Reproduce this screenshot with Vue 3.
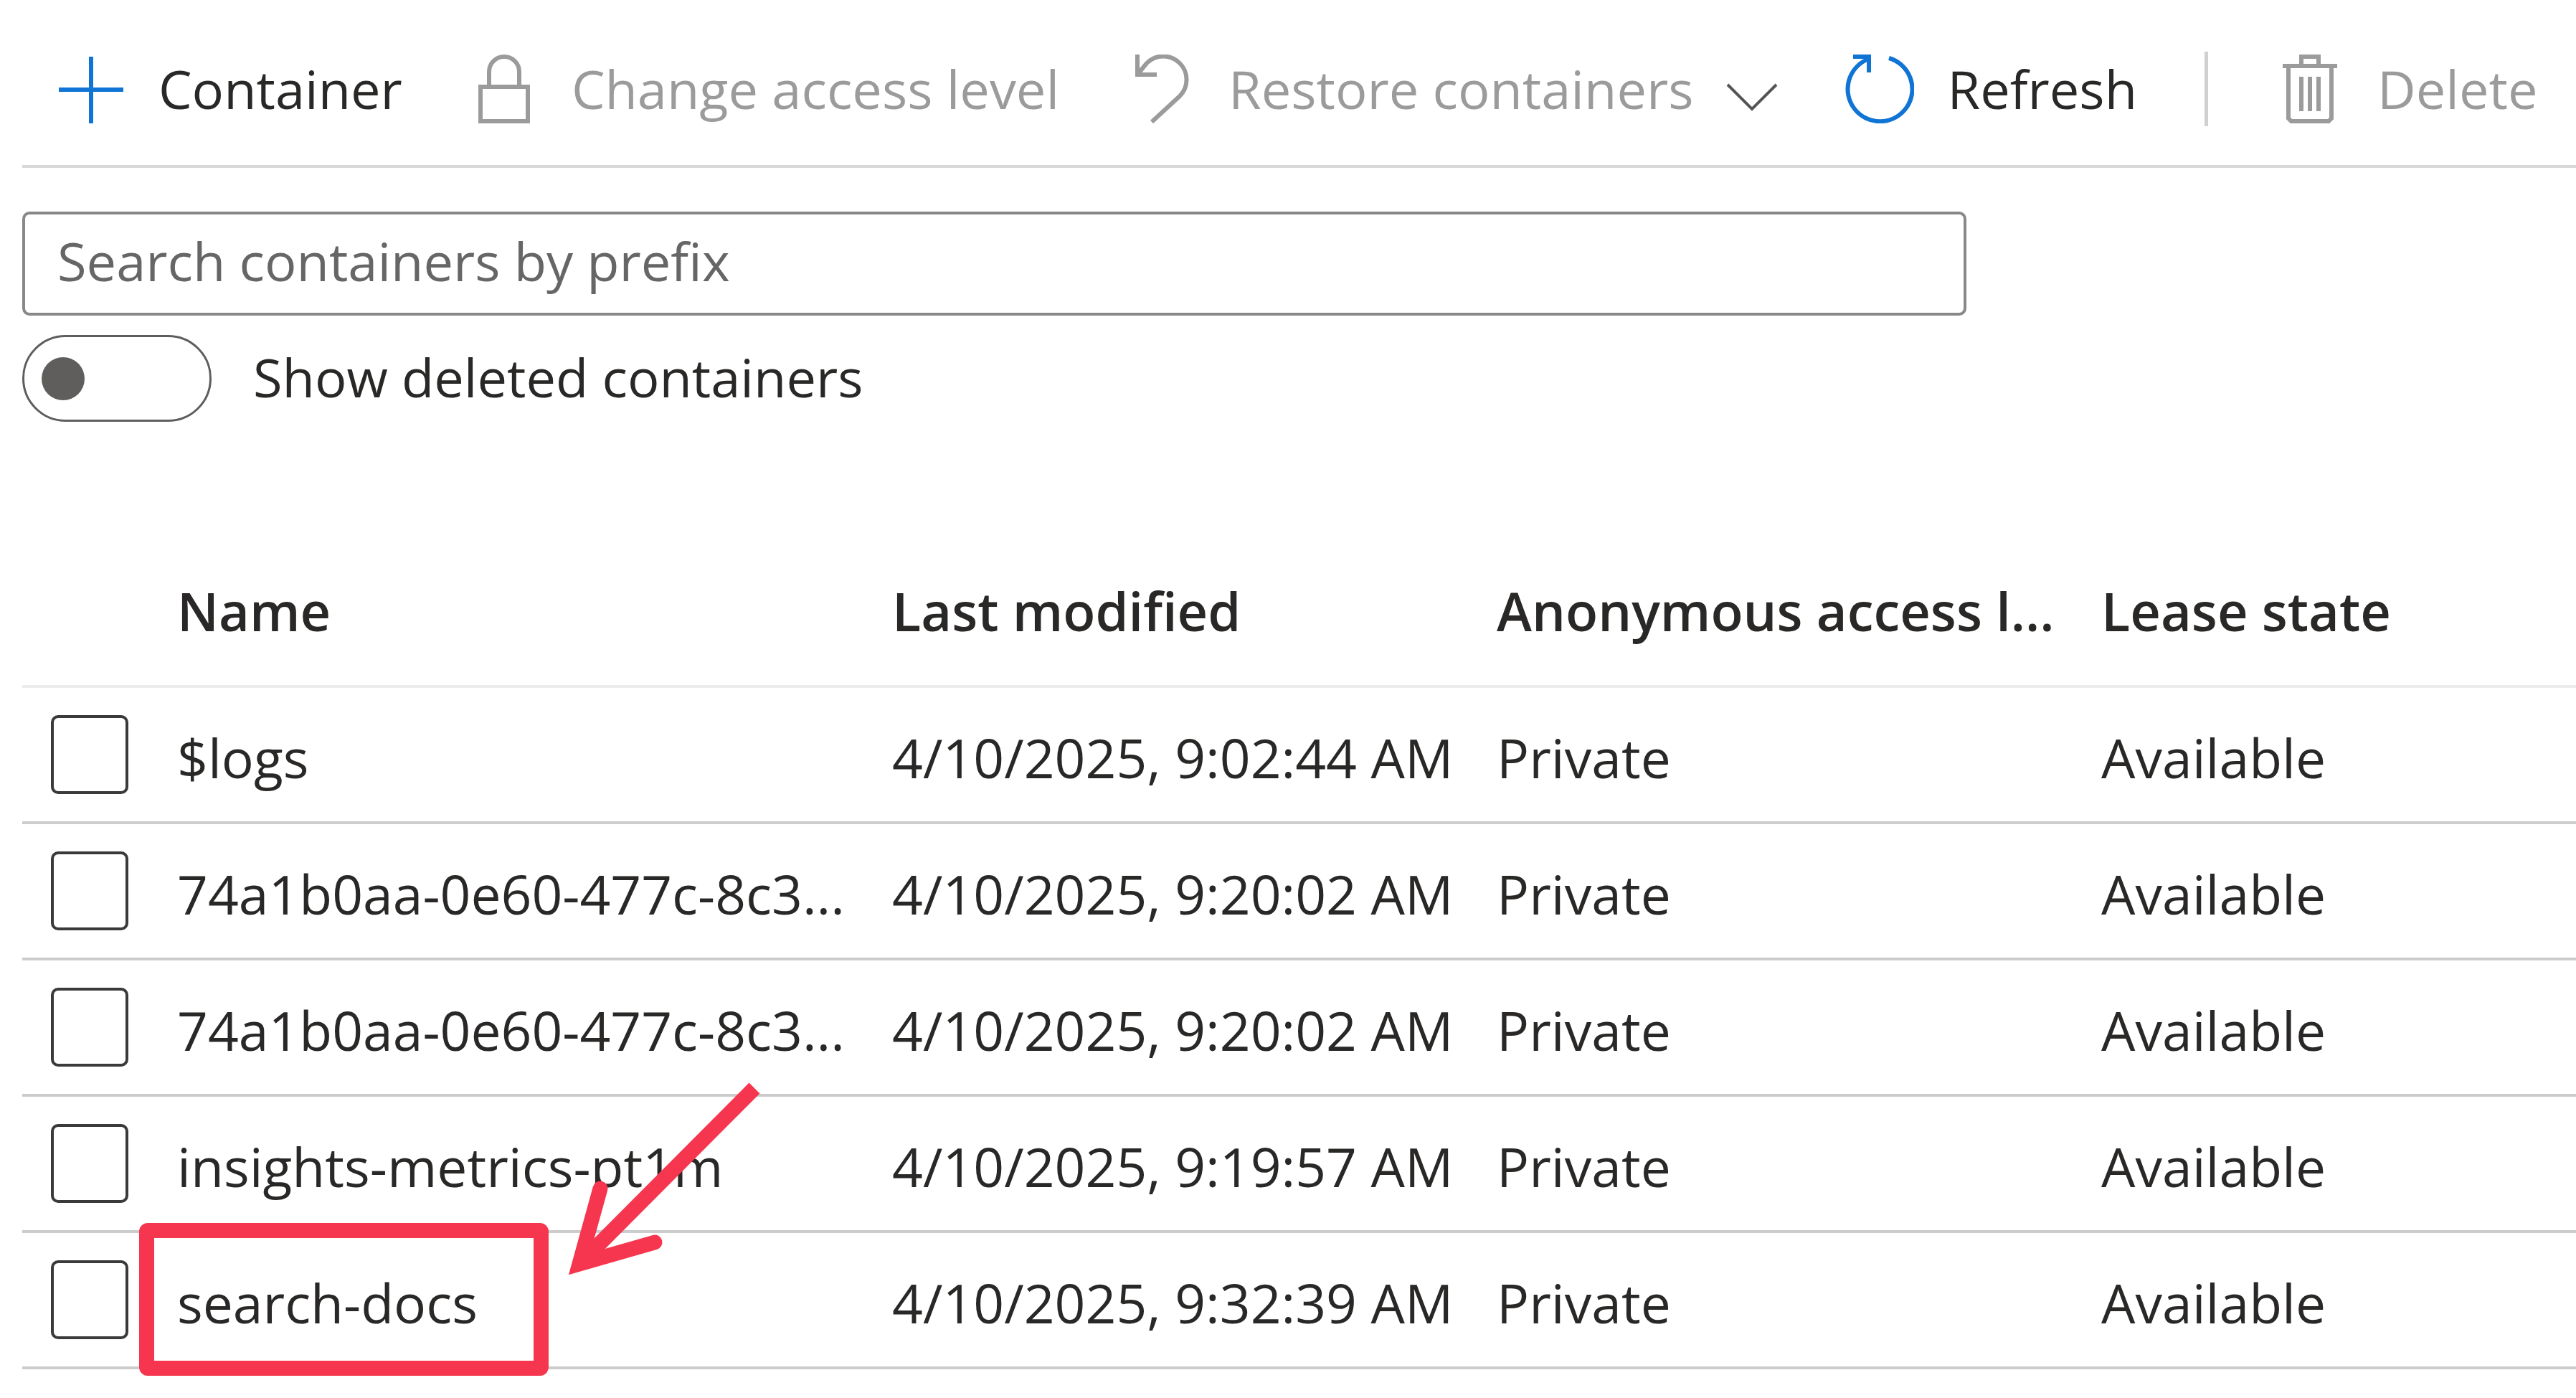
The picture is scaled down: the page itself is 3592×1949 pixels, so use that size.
<script setup>
import { ref } from 'vue'

const search = ref('')
const showDeleted = ref(false)
const columns = ['Name', 'Last modified', 'Anonymous access l...', 'Lease state']
const rows = ref([
  { name: '$logs', modified: '4/10/2025, 9:02:44 AM', selected: false },
  { name: '74a1b0aa-0e60-477c-8c3...', modified: '4/10/2025, 9:20:02 AM', selected: false },
  { name: '74a1b0aa-0e60-477c-8c3...', modified: '4/10/2025, 9:20:02 AM', selected: false },
  { name: 'insights-metrics-pt1m', modified: '4/10/2025, 9:19:57 AM', selected: false },
  { name: 'search-docs', modified: '4/10/2025, 9:32:39 AM', selected: false, marked: true },
])
</script>

<template>
  <main class="page">
    <div class="toolbar" role="toolbar" aria-label="Container actions">
      <button type="button" class="command">
        <svg class="icon blue" viewBox="0 0 96 96"><path d="M48 3v93M3 49h90" /></svg>
        <span>Container</span>
      </button>
      <button type="button" class="command" disabled>
        <svg class="icon" viewBox="0 0 96 96"><path d="M15 45h66v48H15zM27 45V24a21 21 0 0 1 42 0v21" /></svg>
        <span>Change access level</span>
      </button>
      <button type="button" class="command" disabled>
        <svg class="icon" viewBox="0 0 96 96"><path d="M15 0v28h27M15 28L28 12A32 32 0 0 1 74 58L35 94" /></svg>
        <span>Restore containers</span>
        <svg class="chevron" viewBox="0 0 72 40"><path d="M2 2l34 34L70 2" /></svg>
      </button>
      <button type="button" class="command">
        <svg class="icon blue" viewBox="0 0 96 96"><path d="M11 3h25M33 3v22M33 6A45 45 0 1 0 61 5" /></svg>
        <span>Refresh</span>
      </button>
      <span class="divider"></span>
      <button type="button" class="command" disabled>
        <svg class="icon" viewBox="0 0 96 96"><path d="M10 16h76M36 16V3h24v13M18 16v73l4 4h52l4-4V16M36 31v48M48 31v48M60 31v48" /></svg>
        <span>Delete</span>
      </button>
    </div>

    <div class="filters">
      <input v-model="search" class="search" type="text" placeholder="Search containers by prefix" aria-label="Search containers by prefix" />
      <label class="switch">
        <input v-model="showDeleted" type="checkbox" role="switch" />
        <span>Show deleted containers</span>
      </label>
    </div>

    <table class="grid">
      <colgroup>
        <col class="col-select" />
        <col class="col-name" />
        <col class="col-modified" />
        <col class="col-access" />
        <col />
      </colgroup>
      <thead>
        <tr>
          <td></td>
          <th v-for="column in columns" :key="column" scope="col">{{ column }}</th>
        </tr>
      </thead>
      <tbody>
        <tr v-for="(row, index) in rows" :key="index">
          <td class="select"><input v-model="row.selected" type="checkbox" :aria-label="'Select ' + row.name" /></td>
          <td class="name">
            {{ row.name }}
            <template v-if="row.marked">
              <span class="highlight"></span>
              <svg class="arrow" viewBox="0 0 280 280">
                <path d="M267 11L23 256" />
                <path class="head" d="M52 151L23 256L128 226" />
              </svg>
            </template>
          </td>
          <td>{{ row.modified }}</td>
          <td>Private</td>
          <td>Available</td>
        </tr>
      </tbody>
    </table>
  </main>
</template>

<style>
body {
  background: #fff;
}
</style>

<style scoped>
.page {
  padding: 0 0 32px 31px;
  color: #292827;
  font-family: "Open Sans", "Noto Sans", sans-serif;
  font-size: 74px;
  line-height: 100px;
}

.toolbar {
  display: flex;
  align-items: center;
  gap: 94px;
  height: 234px;
  box-sizing: border-box;
  padding: 18px 0 0 48px;
  border-bottom: 4px solid #d8d8d8;
}

.command {
  display: flex;
  flex: none;
  align-items: center;
  gap: 46px;
  padding: 0;
  border: 0;
  background: none;
  color: inherit;
  font: inherit;
  white-space: nowrap;
}

.command:disabled {
  color: #9b9b9b;
}

.icon,
.chevron {
  flex: none;
  fill: none;
  stroke: currentColor;
  stroke-width: 6px;
}

.icon {
  width: 96px;
  height: 96px;
}

.blue {
  color: #0f74d4;
}

.chevron {
  width: 72px;
  height: 40px;
  margin-top: 24px;
  color: #555;
  stroke-width: 4px;
}

.divider {
  width: 5px;
  height: 104px;
  background: #d0d0d0;
}

.filters {
  display: flex;
  flex-direction: column;
  align-items: flex-start;
  gap: 27px;
  padding-top: 61px;
}

.search {
  width: 2711px;
  max-width: 100%;
  height: 145px;
  box-sizing: border-box;
  padding: 0 45px 8px;
  border: 4px solid #8a8886;
  border-radius: 10px;
  background: #fff;
  color: inherit;
  font: inherit;
}

.search::placeholder {
  color: #666;
  opacity: 1;
}

.switch {
  display: flex;
  align-items: center;
  gap: 58px;
}

.switch span {
  padding-bottom: 4px;
}

.switch input {
  display: flex;
  align-items: center;
  width: 264px;
  height: 121px;
  box-sizing: border-box;
  margin: 0;
  padding: 0 24px;
  appearance: none;
  border: 3px solid #605e5c;
  border-radius: 61px;
}

.switch input::before {
  width: 60px;
  height: 60px;
  border-radius: 50%;
  background: #605e5c;
  content: "";
}

.switch input:checked {
  justify-content: flex-end;
}

.grid {
  width: 100%;
  margin-top: 161px;
  border-collapse: separate;
  border-spacing: 0;
  table-layout: fixed;
}

.col-select {
  width: 216px;
}

.col-name {
  width: 28%;
}

.col-modified,
.col-access {
  width: 843px;
}

th,
td {
  height: 190px;
  box-sizing: border-box;
  padding: 8px 0 0;
  border-bottom: 4px solid #ccc;
  font-size: 75px;
  text-align: left;
  vertical-align: middle;
  white-space: nowrap;
}

thead th,
thead td {
  height: 210px;
  padding: 0;
  border-bottom-color: #ececec;
  font-size: 74px;
  font-weight: 600;
}

.grid .select {
  padding: 0 0 0 40px;
}

.select input {
  display: block;
  width: 108px;
  height: 110px;
  box-sizing: border-box;
  margin: 0;
  appearance: none;
  border: 4px solid #3b3a39;
  border-radius: 10px;
}

.name {
  position: relative;
}

.highlight {
  position: absolute;
  top: -14px;
  left: -53px;
  width: 571px;
  height: 213px;
  box-sizing: border-box;
  border: 21px solid #f6364f;
  border-radius: 12px;
}

.arrow {
  position: absolute;
  top: -213px;
  left: 538px;
  width: 280px;
  height: 280px;
  fill: none;
  stroke: #f6364f;
  stroke-width: 21px;
}

.head {
  stroke-linecap: round;
}
</style>
